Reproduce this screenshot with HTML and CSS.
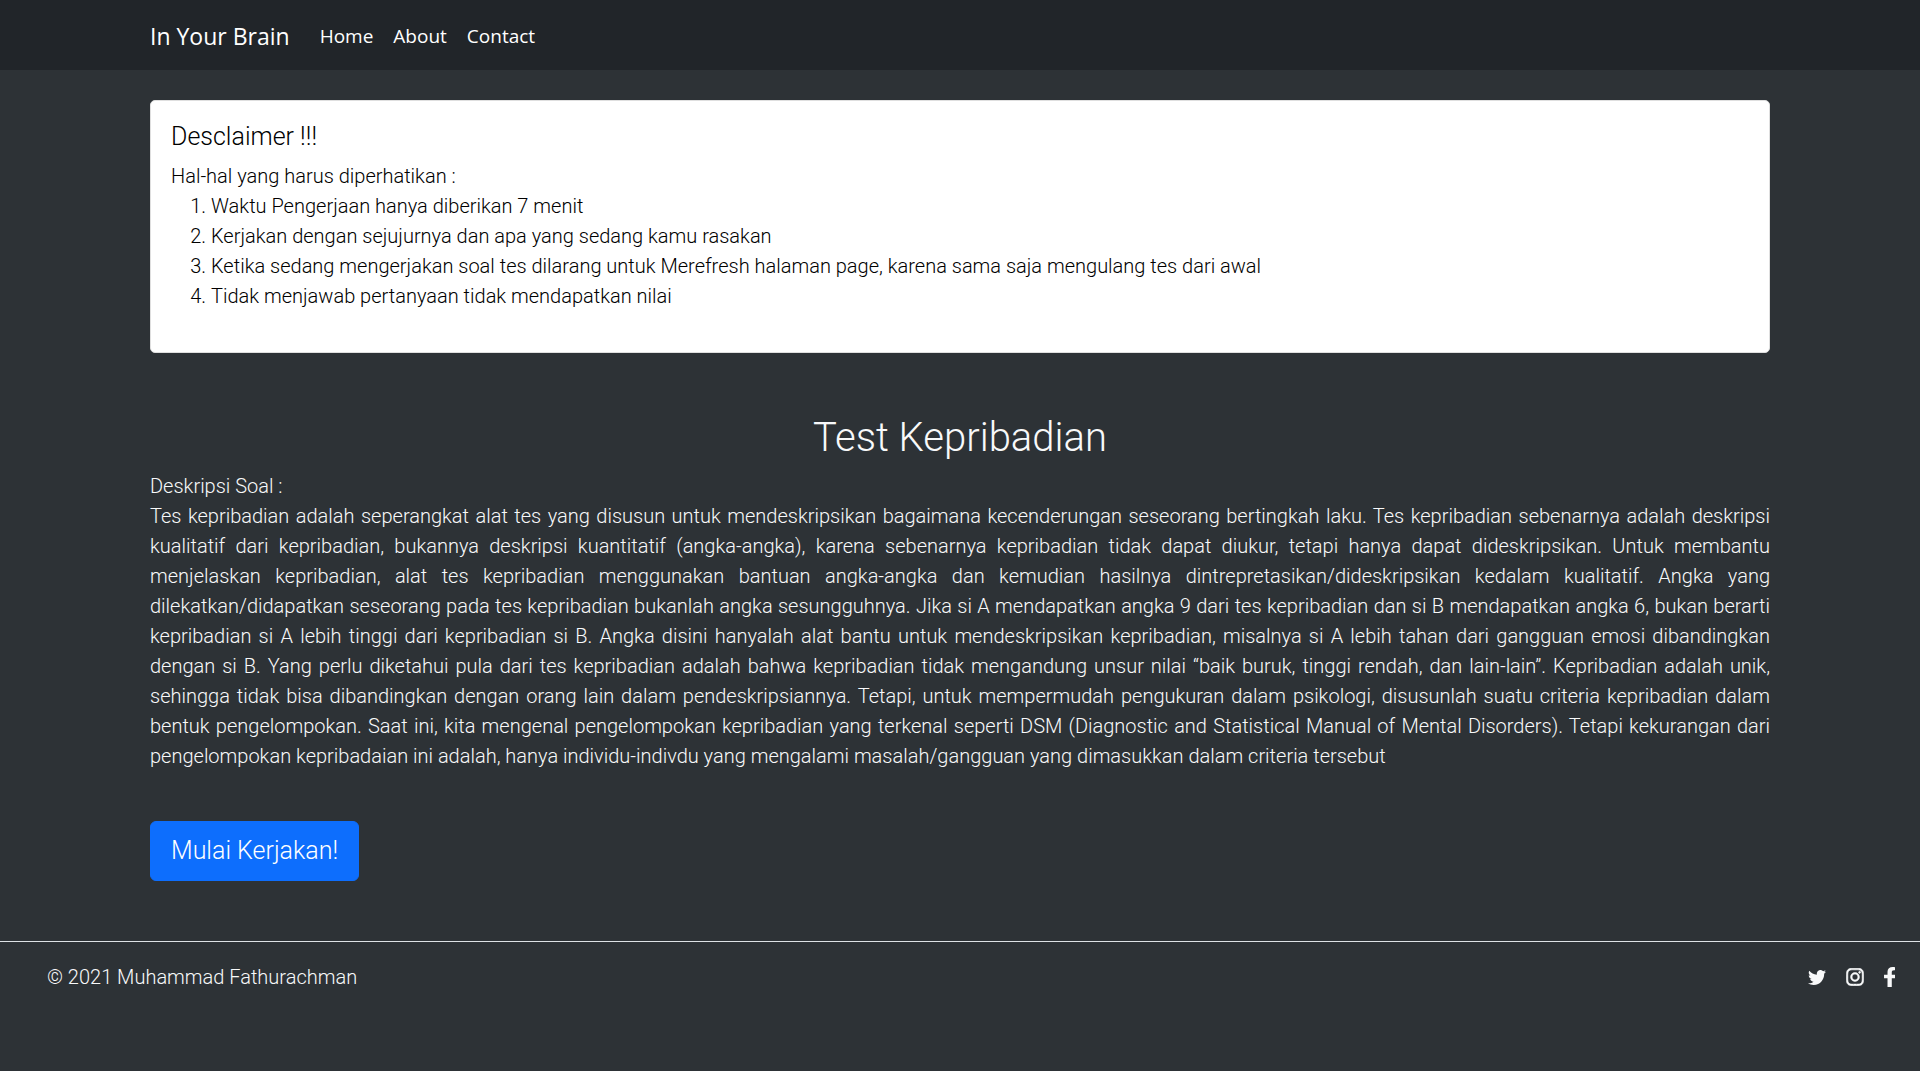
FILE: index.html
```html
<!DOCTYPE html>
<html lang="id">
<head>
  <meta charset="utf-8">
  <meta name="viewport" content="width=device-width, initial-scale=1">
  <title>In Your Brain</title>
  <link rel="stylesheet" href="styles.css">
</head>
<body>
  <header class="navbar">
    <nav class="container navbar-inner">
      <a class="brand" href="#">In Your Brain</a>
      <ul class="nav-list">
        <li><a class="nav-link" href="#">Home</a></li>
        <li><a class="nav-link" href="#">About</a></li>
        <li><a class="nav-link" href="#">Contact</a></li>
      </ul>
    </nav>
  </header>

  <main class="container">
    <section class="card">
      <h2 class="card-title">Desclaimer !!!</h2>
      <p class="card-text">Hal-hal yang harus diperhatikan :</p>
      <ol class="rules">
        <li>Waktu Pengerjaan hanya diberikan 7 menit</li>
        <li>Kerjakan dengan sejujurnya dan apa yang sedang kamu rasakan</li>
        <li>Ketika sedang mengerjakan soal tes dilarang untuk Merefresh halaman page, karena sama saja mengulang tes dari awal</li>
        <li>Tidak menjawab pertanyaan tidak mendapatkan nilai</li>
      </ol>
    </section>

    <section class="test">
      <h1 class="test-title">Test Kepribadian</h1>
      <p class="test-label">Deskripsi Soal :</p>
      <p class="test-text">Tes kepribadian adalah seperangkat alat tes yang disusun untuk mendeskripsikan bagaimana kecenderungan seseorang bertingkah laku. Tes kepribadian sebenarnya adalah deskripsi kualitatif dari kepribadian, bukannya deskripsi kuantitatif (angka-angka), karena sebenarnya kepribadian tidak dapat diukur, tetapi hanya dapat dideskripsikan. Untuk membantu menjelaskan kepribadian, alat tes kepribadian menggunakan bantuan angka-angka dan kemudian hasilnya dintrepretasikan/dideskripsikan kedalam kualitatif. Angka yang dilekatkan/didapatkan seseorang pada tes kepribadian bukanlah angka sesungguhnya. Jika si A mendapatkan angka 9 dari tes kepribadian dan si B mendapatkan angka 6, bukan berarti kepribadian si A lebih tinggi dari kepribadian si B. Angka disini hanyalah alat bantu untuk mendeskripsikan kepribadian, misalnya si A lebih tahan dari gangguan emosi dibandingkan dengan si B. Yang perlu diketahui pula dari tes kepribadian adalah bahwa kepribadian tidak mengandung unsur nilai “baik buruk, tinggi rendah, dan lain-lain”. Kepribadian adalah unik, sehingga tidak bisa dibandingkan dengan orang lain dalam pendeskripsiannya. Tetapi, untuk mempermudah pengukuran dalam psikologi, disusunlah suatu criteria kepribadian dalam bentuk pengelompokan. Saat ini, kita mengenal pengelompokan kepribadian yang terkenal seperti DSM (Diagnostic and Statistical Manual of Mental Disorders). Tetapi kekurangan dari pengelompokan kepribadaian ini adalah, hanya individu-indivdu yang mengalami masalah/gangguan yang dimasukkan dalam criteria tersebut</p>
      <button class="btn" type="button">Mulai Kerjakan!</button>
    </section>
  </main>

  <footer class="footer">
    <p class="copyright">© 2021 Muhammad Fathurachman</p>
    <div class="social">
      <a href="#" aria-label="Twitter"><svg width="18" height="15" viewBox="0 49 512 415" preserveAspectRatio="none"><path d="M459.37 151.716c.325 4.548.325 9.097.325 13.645 0 138.72-105.583 298.558-298.558 298.558-59.452 0-114.68-17.219-161.137-47.106 8.447.974 16.568 1.299 25.34 1.299 49.055 0 94.213-16.568 130.274-44.832-46.132-.975-84.792-31.188-98.112-72.772 6.498.974 12.995 1.624 19.818 1.624 9.421 0 18.843-1.3 27.614-3.573-48.081-9.747-84.143-51.98-84.143-102.985v-1.299c13.969 7.797 30.214 12.67 47.431 13.319-28.264-18.843-46.781-51.005-46.781-87.391 0-19.492 5.197-37.36 14.294-52.954 51.655 63.675 129.3 105.258 216.365 109.807-1.624-7.797-2.599-15.918-2.599-24.04 0-57.828 46.782-104.934 104.934-104.934 30.213 0 57.502 12.67 76.67 33.137 23.715-4.548 46.456-13.32 66.599-25.34-7.798 24.366-24.366 44.833-46.132 57.827 21.117-2.273 41.584-8.122 60.426-16.243-14.292 20.791-32.161 39.308-52.628 54.253z"/></svg></a>
      <a href="#" aria-label="Instagram"><svg class="icon-bold" width="18" height="18" viewBox="-8 24 464 464"><path d="M224.1 141c-63.6 0-114.9 51.3-114.9 114.9s51.3 114.9 114.9 114.9S339 319.500 339 255.900 287.700 141 224.100 141zm0 189.600c-41.100 0-74.700-33.500-74.700-74.700s33.500-74.700 74.700-74.700 74.700 33.500 74.700 74.700-33.600 74.700-74.700 74.700zm146.400-194.300c0 14.900-12 26.800-26.800 26.800-14.900 0-26.800-12-26.800-26.800s12-26.800 26.800-26.800 26.800 12 26.800 26.800zm76.100 27.200c-1.700-35.900-9.900-67.700-36.200-93.900-26.200-26.200-58-34.400-93.900-36.200-37-2.100-147.900-2.100-184.900 0-35.800 1.700-67.600 9.900-93.900 36.100s-34.400 58-36.200 93.900c-2.100 37-2.100 147.900 0 184.900 1.700 35.900 9.900 67.700 36.200 93.900s58 34.400 93.900 36.200c37 2.100 147.900 2.100 184.900 0 35.900-1.700 67.700-9.900 93.900-36.200 26.200-26.200 34.400-58 36.200-93.900 2.100-37 2.100-147.800 0-184.800zM398.800 388c-7.800 19.600-22.900 34.700-42.600 42.600-29.500 11.700-99.500 9-132.100 9s-102.700 2.600-132.100-9c-19.600-7.800-34.700-22.900-42.600-42.600-11.700-29.500-9-99.500-9-132.100s-2.600-102.700 9-132.100c7.800-19.600 22.900-34.700 42.600-42.600 29.500-11.700 99.500-9 132.100-9s102.700-2.600 132.100 9c19.600 7.800 34.700 22.900 42.600 42.600 11.700 29.500 9 99.500 9 132.100s2.700 102.700-9 132.100z"/></svg></a>
      <a href="#" aria-label="Facebook"><svg width="11" height="20" viewBox="22 0 258 512" preserveAspectRatio="none"><path d="M279.140 288l14.220-92.660h-88.910v-60.130c0-25.350 12.420-50.060 52.240-50.060h40.420V6.260S260.430 0 225.360 0c-73.220 0-121.080 44.380-121.080 124.720v70.620H22.890V288h81.390v224h100.170V288z"/></svg></a>
    </div>
  </footer>
</body>
</html>
```

FILE: styles.css
```css
*, *::before, *::after { box-sizing: border-box; }

body {
  margin: 0;
  background: #2d3236;
  color: #f8f9fa;
  font-family: Roboto, sans-serif;
  font-size: 20px;
  font-weight: 300;
  line-height: 30px;
}

h1, h2, p, ol, ul { margin: 0; }

h1, h2 { font-weight: 300; }

a { color: inherit; text-decoration: none; }

.container {
  width: 100%;
  max-width: 1650px;
  margin: 0 auto;
  padding: 0 15px;
}

.navbar {
  background: #212529;
  font-family: "Open Sans", "Noto Sans", sans-serif;
  font-weight: 400;
}

.navbar-inner {
  display: flex;
  align-items: center;
  gap: 30px;
  min-height: 70px;
  padding-top: 2px;
}

.brand { color: #fff; font-size: 23px; }

.nav-list {
  display: flex;
  gap: 20px;
  padding: 0;
  list-style: none;
}

.nav-link { color: #fff; font-size: 19px; }

.card {
  margin-top: 30px;
  padding: 20px 20px 41px;
  border: 1px solid #dfdfdf;
  border-radius: 5px;
  background: #fff;
  color: #000;
}

.card-title {
  margin-bottom: 8px;
  font-size: 25px;
  line-height: 32px;
}

.rules { padding-left: 40px; }

.test { margin: 60px 0; }

.test-title {
  margin-bottom: 8px;
  font-size: 40px;
  line-height: 50px;
  text-align: center;
}

.test-text { text-align: justify; }

.btn {
  margin-top: 50px;
  padding: 10px 20px;
  border: 1px solid #0d6efd;
  border-radius: 6px;
  background: #0d6efd;
  color: #fff;
  font: 300 25px/38px Roboto, sans-serif;
}

.footer {
  display: flex;
  justify-content: space-between;
  align-items: center;
  padding: 20px 25px 20px 47px;
  border-top: 1px solid #dee2e6;
}

.social {
  display: flex;
  align-items: center;
  gap: 20px;
}

.social a { display: flex; }

.social svg { fill: #f8f9fa; }

.social .icon-bold { stroke: #f8f9fa; stroke-width: 14px; }
```
